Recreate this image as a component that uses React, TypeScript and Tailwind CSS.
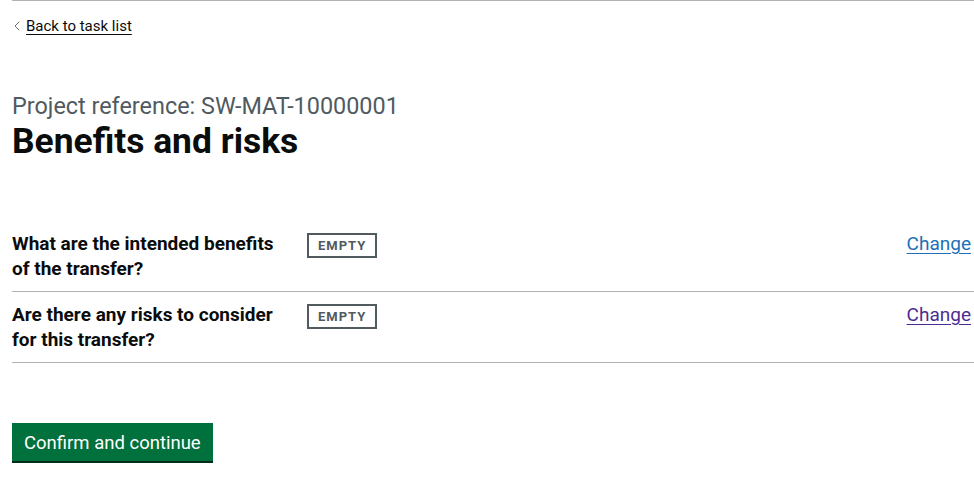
import { ChevronLeft } from 'lucide-react';

type Row = {
  question: string[];
  status: string;
  visited: boolean;
};

const ROWS: Row[] = [
  {
    question: ['What are the intended benefits', 'of the transfer?'],
    status: 'Empty',
    visited: false,
  },
  {
    question: ['Are there any risks to consider', 'for this transfer?'],
    status: 'Empty',
    visited: true,
  },
];

function SummaryRow({ row }: { row: Row }) {
  return (
    <div className="flex border-b border-[#b1b4b6] py-[10px]">
      <dt className="w-[295px] shrink-0 pr-5 text-[19px] font-bold leading-[25px] text-[#0b0c0c]">
        {row.question.map((line) => (
          <div key={line}>{line}</div>
        ))}
      </dt>
      <dd className="flex-1 pt-[2px]">
        <strong className="inline-block border-2 border-[#505a5f] px-[9px] pb-[3px] pt-[4px] text-[13px] font-bold uppercase leading-[14px] tracking-[1px] text-[#505a5f]">
          {row.status}
        </strong>
      </dd>
      <dd className="pr-[3px] text-right text-[19px] leading-[25px]">
        <a
          href="#"
          className={
            row.visited
              ? 'text-[#4c2c92] underline underline-offset-[3px]'
              : 'text-[#1d70b8] underline underline-offset-[3px]'
          }
        >
          Change
        </a>
      </dd>
    </div>
  );
}

export default function App() {
  return (
    <div className="min-h-screen bg-white font-['Roboto',sans-serif] text-[#0b0c0c]">
      <div className="ml-3 border-t border-[#b1b4b6]">
        <div className="pt-[15px]">
          <a href="#" className="flex items-center gap-[1px] text-[15px] leading-[20px] text-[#0b0c0c]">
            <ChevronLeft size={16} strokeWidth={1.3} className="-ml-[3px] text-[#505a5f]" />
            <span className="underline underline-offset-[3px]">Back to task list</span>
          </a>
        </div>

        <main className="pt-[58px]">
          <span className="block text-[23.4px] leading-[25px] text-[#505a5f]">
            Project reference: SW-MAT-10000001
          </span>
          <h1 className="mt-[2px] text-[35.4px] font-bold leading-[40px]">Benefits and risks</h1>

          <dl className="mt-[60px]">
            {ROWS.map((row) => (
              <SummaryRow key={row.question[0]} row={row} />
            ))}
          </dl>

          <button className="mt-[60px] bg-[#00703c] px-[12px] pb-[6px] pt-[9px] text-[18.5px] leading-[23px] text-white shadow-[0_2px_0_#002d18]">
            Confirm and continue
          </button>
        </main>
      </div>
    </div>
  );
}
